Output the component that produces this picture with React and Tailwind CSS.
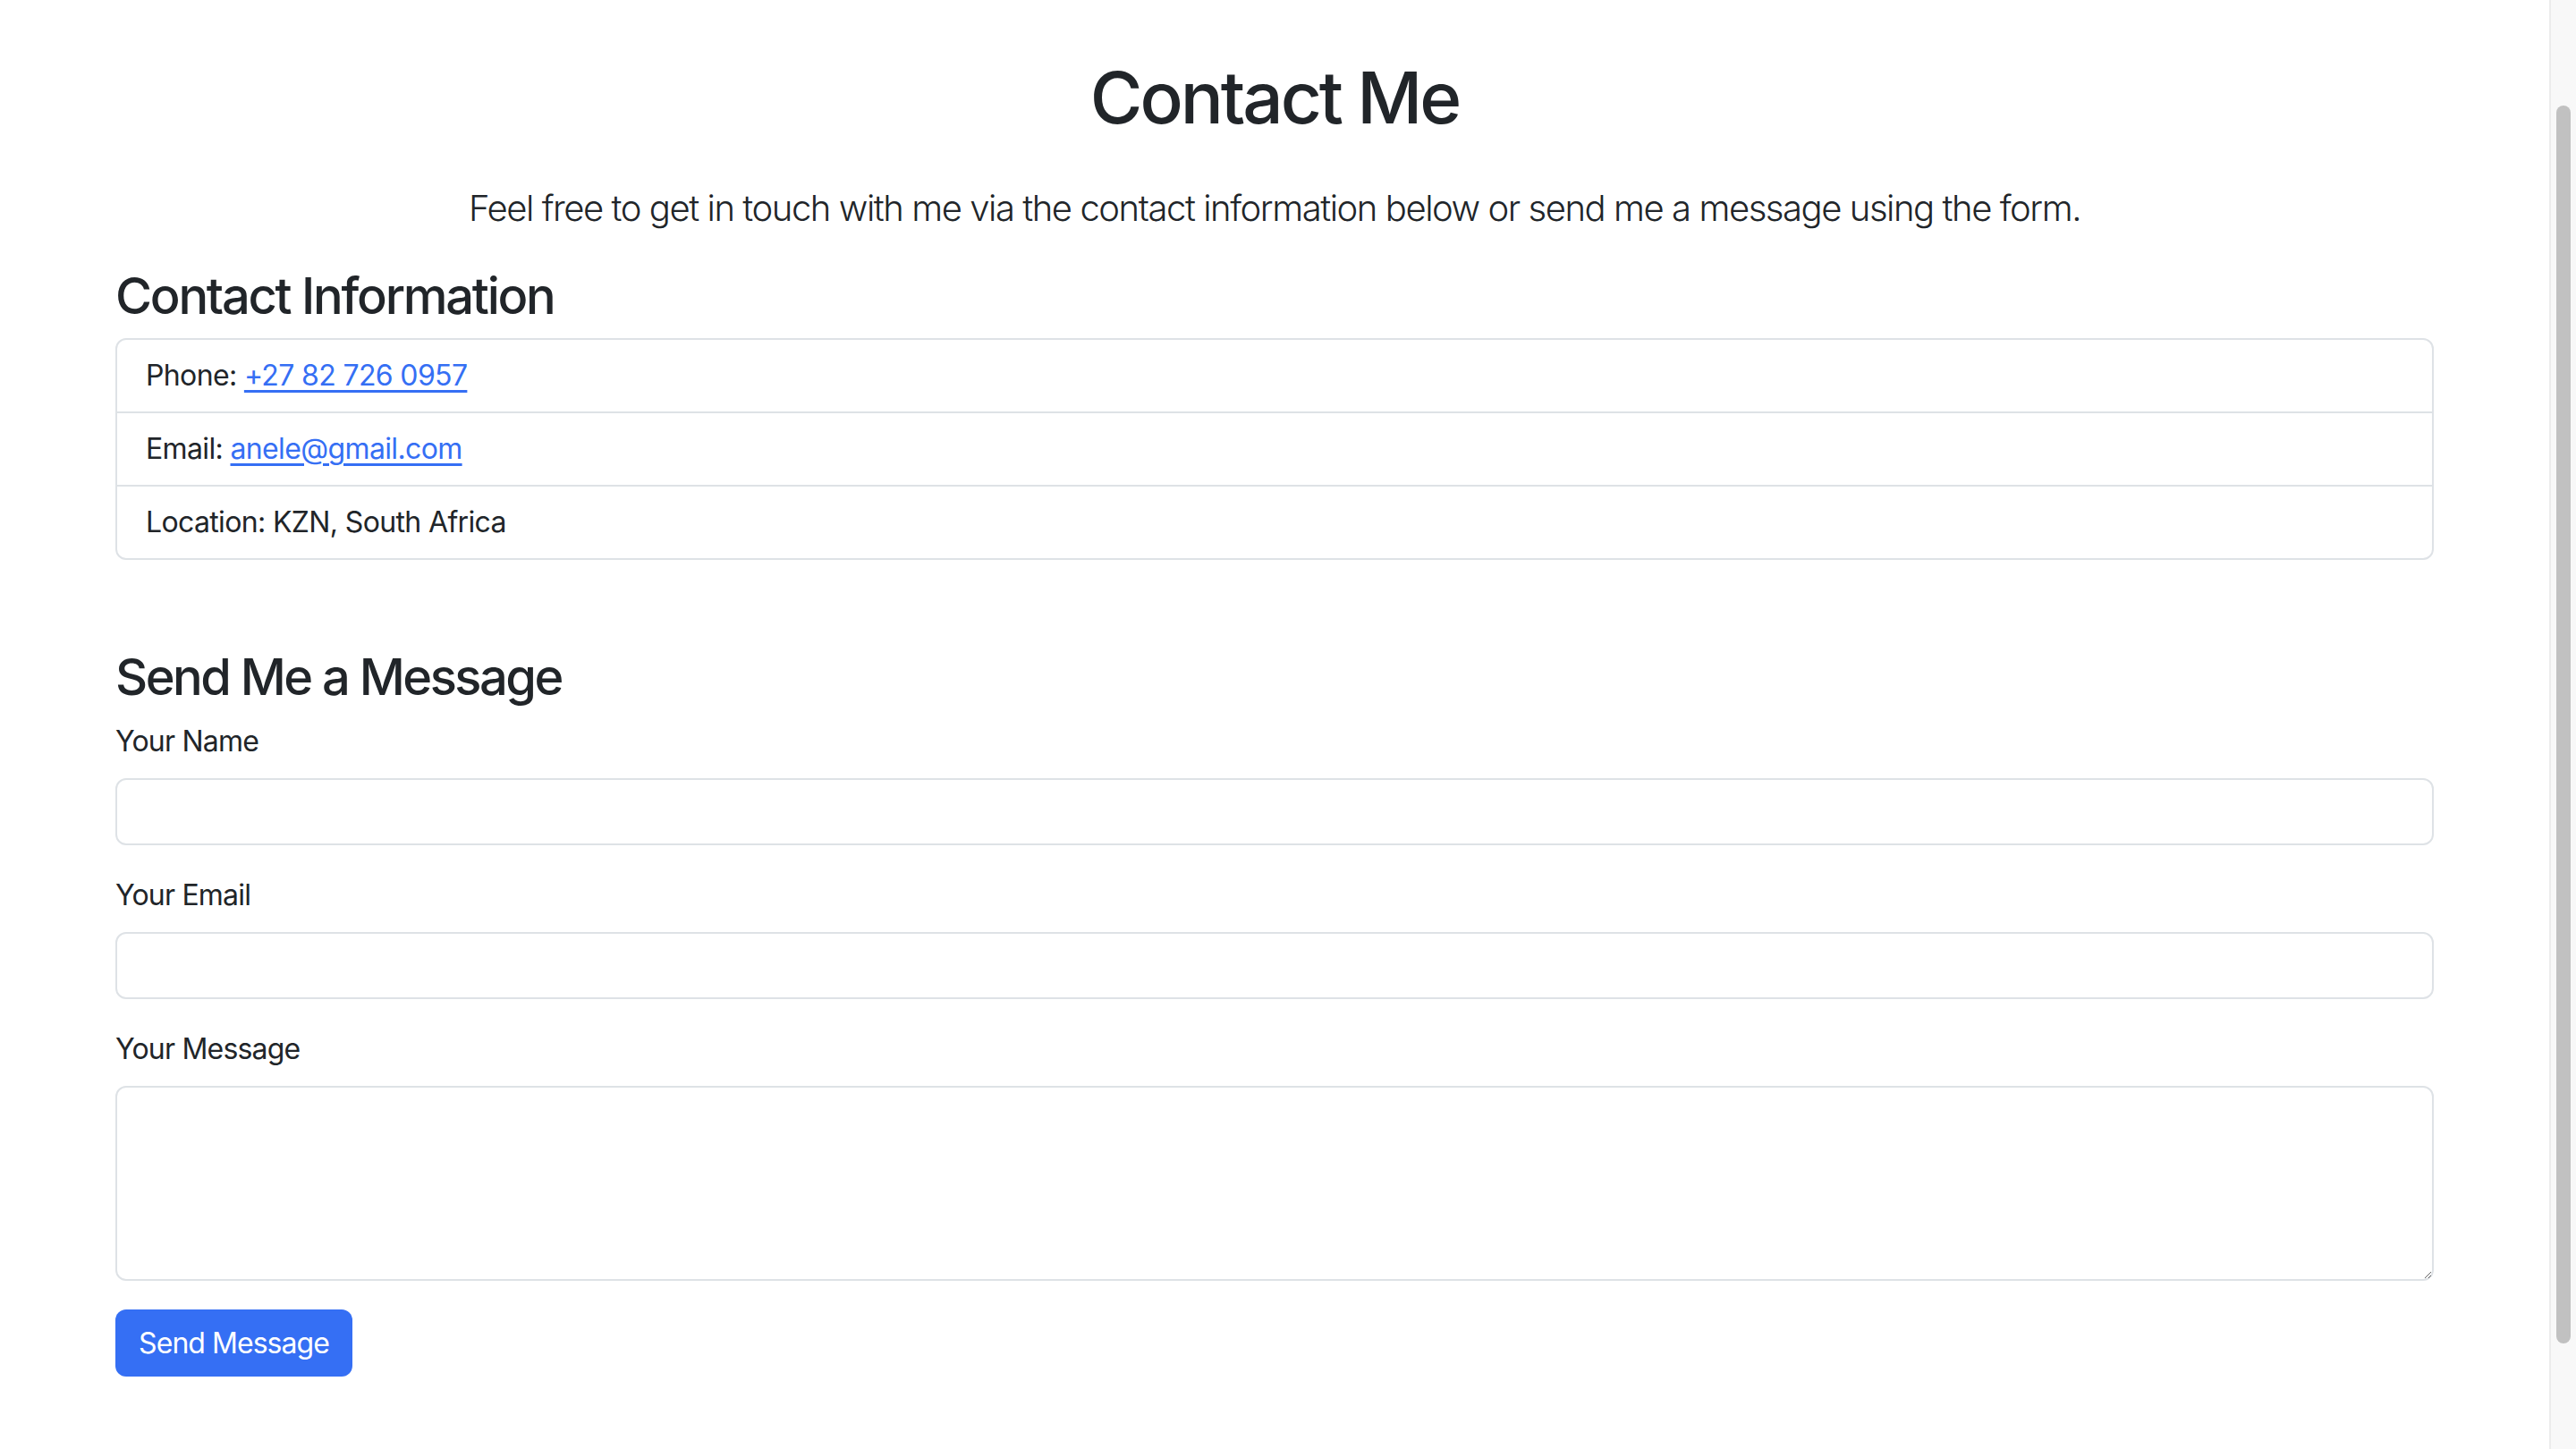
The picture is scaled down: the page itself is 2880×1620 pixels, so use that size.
import React from 'react';

// Bloc d'infos de contact, une ligne par item
const InfoRow = ({ label, children, last }) => (
    <li className={`px-[32px] py-[16px] text-[32px] leading-[48px] tracking-[-0.02em] ${last ? '' : 'border-b-2 border-[#dee2e6]'}`}>
        {label}: {children}
    </li>
);

const Field = ({ id, label, children }) => (
    <div className="mb-[32px]">
        <label htmlFor={id} className="block text-[32px] leading-[48px] tracking-[-0.025em] mb-[17px]">{label}</label>
        {children}
    </div>
);

const inputCls = 'block w-full rounded-[12px] border-2 border-[#dee2e6] bg-white px-[24px] text-[32px] leading-[48px] outline-none';

export default function App() {
    return (
        <div className="flex h-[1620px] overflow-hidden bg-white text-[#212529] font-['Inter','Liberation_Sans',sans-serif]">
            <main className="flex-1">
                <div className="mx-auto w-[2640px] px-[24px] pt-[61px]">
                    <h1 className="text-center text-[80px] leading-[96px] font-[550] tracking-[-0.038em] mb-[46px]">Contact Me</h1>
                    <p className="text-center text-[40px] leading-[60px] font-light tracking-[-0.036em] mb-[35px]">
                        Feel free to get in touch with me via the contact information below or send me a message using the form.
                    </p>

                    <h3 className="text-[56px] leading-[67px] font-[550] tracking-[-0.04em] mb-[13px]">Contact Information</h3>
                    <ul className="rounded-[12px] border-2 border-[#dee2e6]">
                        <InfoRow label="Phone">
                            <a href="#" className="text-[#356ff4] underline underline-offset-[5px]">+27 82 726 0957</a>
                        </InfoRow>
                        <InfoRow label="Email">
                            <a href="#" className="text-[#356ff4] underline underline-offset-[5px]">anele@gmail.com</a>
                        </InfoRow>
                        <InfoRow label="Location" last>KZN, South Africa</InfoRow>
                    </ul>

                    <h3 className="mt-[98px] text-[56px] leading-[67px] font-[550] tracking-[-0.045em] mb-[14px]">Send Me a Message</h3>
                    <form onSubmit={e => e.preventDefault()}>
                        <Field id="name" label="Your Name">
                            <input id="name" type="text" className={`${inputCls} h-[75px]`} />
                        </Field>
                        <Field id="email" label="Your Email">
                            <input id="email" type="email" className={`${inputCls} h-[75px]`} />
                        </Field>
                        <Field id="message" label="Your Message">
                            <textarea id="message" rows={4} className={`${inputCls} h-[218px] py-[12px]`} />
                        </Field>
                        <button type="submit" className="h-[75px] w-[265px] rounded-[12px] bg-[#356ff4] text-[32px] leading-[48px] tracking-[-0.03em] text-white">
                            Send Message
                        </button>
                    </form>
                </div>
            </main>

            {/* barre de défilement du navigateur */}
            <div className="w-[30px] shrink-0 border-l-2 border-[#ececec] bg-[#f8f8f8] pt-[118px]">
                <div className="ml-[6px] h-[1384px] w-[16px] rounded-full bg-[#c1c1c1]" />
            </div>
        </div>
    );
}
